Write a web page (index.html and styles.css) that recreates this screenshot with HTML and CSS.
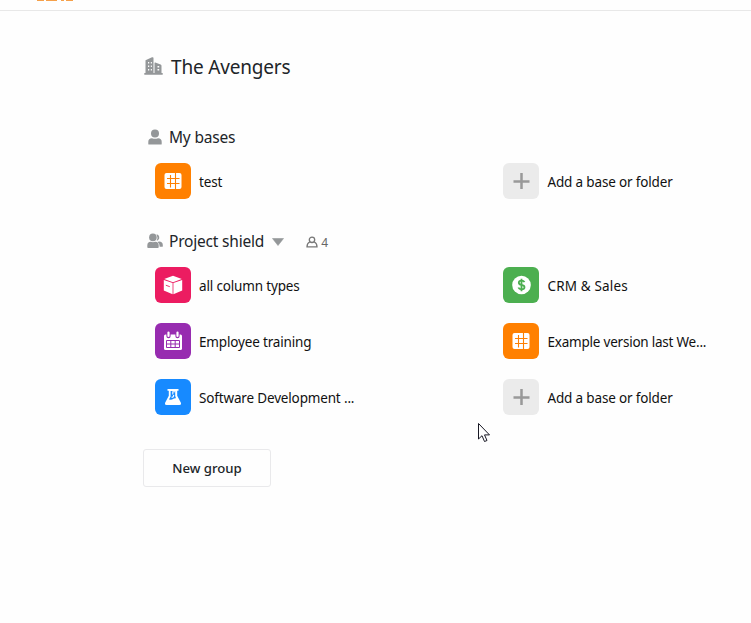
FILE: index.html
```html
<!DOCTYPE html>
<html lang="en">
<head>
<meta charset="utf-8">
<title>The Avengers</title>
<link rel="stylesheet" href="styles.css">
</head>
<body>
<svg class="sprite" width="0" height="0" aria-hidden="true">
  <symbol id="table" viewBox="0 0 18 18">
    <rect x=".5" y="1" width="17" height="16" rx="2" fill="#fff"/>
    <path d="M6.500 3v12.500M11.500 1v16M3 6.500h12.500M3 11.500h12.500" stroke="#ff8000" stroke-width="1.100" fill="none"/>
  </symbol>
  <symbol id="plus" viewBox="0 0 18 18">
    <path d="M9.500 1v16M1.500 9.500h16" stroke="#999" stroke-width="2.500"/>
  </symbol>
</svg>
<header class="topbar">
  <div class="logo"><i></i><i></i><i></i><i></i></div>
</header>
<main class="content">
  <h1 class="org">
    <svg width="19" height="18" viewBox="0 0 19 18"><path fill="#949799" fill-rule="evenodd" d="M1.500 3.200 8 .3q1.500-.4 1.500.7v15h1V6q0-.8.8-.5l5.300 2q.9.400.9 1.200V16h1.200v1.700H.3V16h1.200zM4 5v1.400h1.200V5zm2.800 0v1.400h1.100V5zM4 8.500v1.400h1.200V8.500zm2.800 0v1.400h1.100V8.500zM4 12v1.400h1.200V12zm2.800 0v1.400h1.100V12zM13.500 9v1.400h1.700V9zM13.500 12v1.400h1.700V12z"/></svg>
    <span>The Avengers</span>
  </h1>

  <section class="group">
    <h2 class="group-title">
      <svg width="16" height="16" viewBox="0 0 16 16" fill="#949799"><circle cx="8" cy="4.400" r="4"/><path d="M1.300 15.200v-2.500q0-3.500 3.700-3.500 3 1 6 0 3.700 0 3.700 3.500v2.500q-.2.300-1 .3H2.300q-.8 0-1-.3z"/></svg>
      <span>My bases</span>
    </h2>
    <div class="bases">
      <a class="base"><span class="tile orange"><svg width="18" height="18"><use href="#table"/></svg></span><span class="name">test</span></a>
      <a class="base"><span class="tile gray"><svg width="18" height="18"><use href="#plus"/></svg></span><span class="name">Add a base or folder</span></a>
    </div>
  </section>

  <section class="group">
    <h2 class="group-title">
      <svg width="16" height="16" viewBox="0 0 16 16" fill="#949799"><path d="M9.500 1.200a3.400 3.400 0 0 1 1.400 6.100q-.7.500-1.200.4 1.600-3-.2-6.500zM12 8.500q3.800.2 3.800 3.500v1.200q0 .5-.6.5h-2.500q0-3.400-2.200-4.700z"/><circle cx="5.900" cy="4.400" r="3.800"/><path d="M.3 14.200v-1.700q0-3.700 3.500-3.700 2.200.8 4.400 0 3.500 0 3.500 3.700v1.700q0 .8-1 .8H1.300q-1 0-1-.8z"/></svg>
      <span>Project shield</span>
      <svg class="caret" width="12" height="8" viewBox="0 0 12 8"><path d="M.5.500h11L6 7.500z" fill="#949799" stroke="#949799" stroke-linejoin="round" stroke-width=".6"/></svg>
      <span class="members"><svg width="12" height="12" viewBox="0 0 12 12" fill="none" stroke="#777" stroke-width="1.300"><circle cx="6" cy="3.800" r="2.700"/><path d="M3.800 6Q1 7.200 1 10.800h10Q11 7.200 8.200 6"/></svg><span>4</span></span>
    </h2>
    <div class="bases">
      <a class="base"><span class="tile pink"><svg width="20" height="20" viewBox="0 0 20 20"><path d="M10 .8 18.800 4 10 7.300 1.200 4zM.8 4.900l8.800 3.200v11.100L.8 15.500zM10.400 8.100l8.800-3.200v10.600l-8.800 3.700z" fill="#fff"/><path d="m2.800 10.200 4 1.500" stroke="#ec1c61" stroke-width=".9"/></svg></span><span class="name">all column types</span></a>
      <a class="base"><span class="tile green"><svg width="20" height="20" viewBox="0 0 20 20"><circle cx="10.500" cy="10" r="9.300" fill="#fff"/><path d="M13.500 7.200Q12.700 5.700 10.500 5.700q-2.700 0-2.700 2 0 1.700 2.700 2.200 3 .5 3 2.300 0 2.100-3 2.100-2.400 0-3.100-1.800M10.500 3.700v12.600" stroke="#4caf50" stroke-width="1.800" fill="none"/></svg></span><span class="name wide">CRM &amp; Sales</span></a>
      <a class="base"><span class="tile purple"><svg width="20" height="20" viewBox="0 0 20 20"><path d="M1 5q0-1.500 1.500-1.500h15Q19 3.500 19 5v12.500q0 1.500-1.500 1.500h-15Q1 19 1 17.500z" fill="#fff"/><path d="M5.500 1.500v3.700M14.500 1.500v3.700" stroke="#972cb0" stroke-width="4.200" stroke-linecap="round"/><path d="M5.500 1.500v3.500M14.500 1.500v3.500" stroke="#fff" stroke-width="2.200" stroke-linecap="round"/><path d="M3.500 9.500h13v7h-13zM3.500 13h13M7.800 9.500v7M12.200 9.500v7" fill="none" stroke="#972cb0"/></svg></span><span class="name">Employee training</span></a>
      <a class="base"><span class="tile orange"><svg width="18" height="18"><use href="#table"/></svg></span><span class="name tight">Example version last We...</span></a>
      <a class="base"><span class="tile blue"><svg width="18" height="18" viewBox="0 0 18 18"><path d="M3.500 1h11v1.800h-1.300v5L17 15q.6 2-1.500 2h-13Q.4 17 1 15l3.800-7.200v-5H3.500z" fill="#fff"/><path d="M6.600 3v5.500L5 11.500q2.800.5 4.400-.7 1.200-.9 2.600-.5L11.200 8V3z" fill="#178aff"/><path d="M11 3.700H8.800v2.800M7.500 9.300q2.200 0 2.200-2.400" stroke="#fff" stroke-width="1.100" fill="none"/></svg></span><span class="name">Software Development ...</span></a>
      <a class="base"><span class="tile gray"><svg width="18" height="18"><use href="#plus"/></svg></span><span class="name">Add a base or folder</span></a>
    </div>
  </section>
  <button class="new-group">New group</button>
</main>
<svg class="cursor" width="13" height="20" viewBox="0 0 13 20"><path d="M.5.500v15.500l3.500-3.300 2.500 5.800 2.500-1-2.500-5.600h5z" fill="#fff" stroke="#181824"/></svg>
</body>
</html>
```
FILE: styles.css
```css
* { box-sizing: border-box; }
body {
  margin: 0;
  height: 623px;
  overflow: hidden;
  background: #fefefe;
  color: #212529;
  font-family: "Noto Sans", "Open Sans", sans-serif;
}
.sprite { display: none; }
.topbar { height: 11px; border-bottom: 1px solid #e8e8e8; padding-left: 37px; }
.logo { display: flex; gap: 2px; }
.logo i { height: 1px; background: #f5a04a; width: 7px; }
.logo i:nth-child(2) { width: 11px; }
.logo i:nth-child(3) { width: 3px; margin-left: 2px; }
.content { padding: 40px 0 0 143px; }
h1, h2 { margin: 0; font-weight: 400; }
.org { display: flex; align-items: center; gap: 8px; height: 32px; padding-left: 1px; font-size: 19px; letter-spacing: -.18px; }
.org svg { margin-top: -3px; }
.group { height: 104px; }
.org + .group { margin-top: 42px; }
.group-title { display: flex; align-items: center; height: 24px; padding-left: 4px; font-size: 15.500px; letter-spacing: -.2px; }
.group-title > svg:first-child { margin-right: 6px; }
.group-title .caret { margin: 2px 0 0 8px; }
.members { display: flex; align-items: center; gap: 3px; margin: 2px 0 0 22px; font-size: 12px; color: #666; }
.bases { display: grid; grid-template-columns: 348px 1fr; row-gap: 20px; padding: 14px 0 0 12px; }
.base { display: flex; align-items: center; gap: 8px; height: 36px; font-size: 13.500px; color: #111; white-space: nowrap; }
.base:nth-child(even) { gap: 8.500px; }
.name { padding-top: 2px; letter-spacing: -.16px; }
.wide { letter-spacing: .15px; }
.tight { letter-spacing: -.22px; }
.tile { display: grid; place-items: center; width: 36px; height: 36px; border-radius: 6px; }
.orange { background: #ff8000; }
.pink { background: #ec1c61; }
.green { background: #4caf50; }
.purple { background: #972cb0; }
.blue { background: #178aff; }
.gray { background: #ebebeb; }
.group + .group { height: 220px; }
.new-group {
  display: block;
  width: 128px;
  height: 38px;
  padding: 0;
  border: 1px solid #e9e9eb;
  border-radius: 3px;
  background: #fefefe;
  color: #212529;
  font: 500 13.200px "Noto Sans", "Open Sans", sans-serif;
}
.cursor { position: absolute; left: 478px; top: 423px; }
```
